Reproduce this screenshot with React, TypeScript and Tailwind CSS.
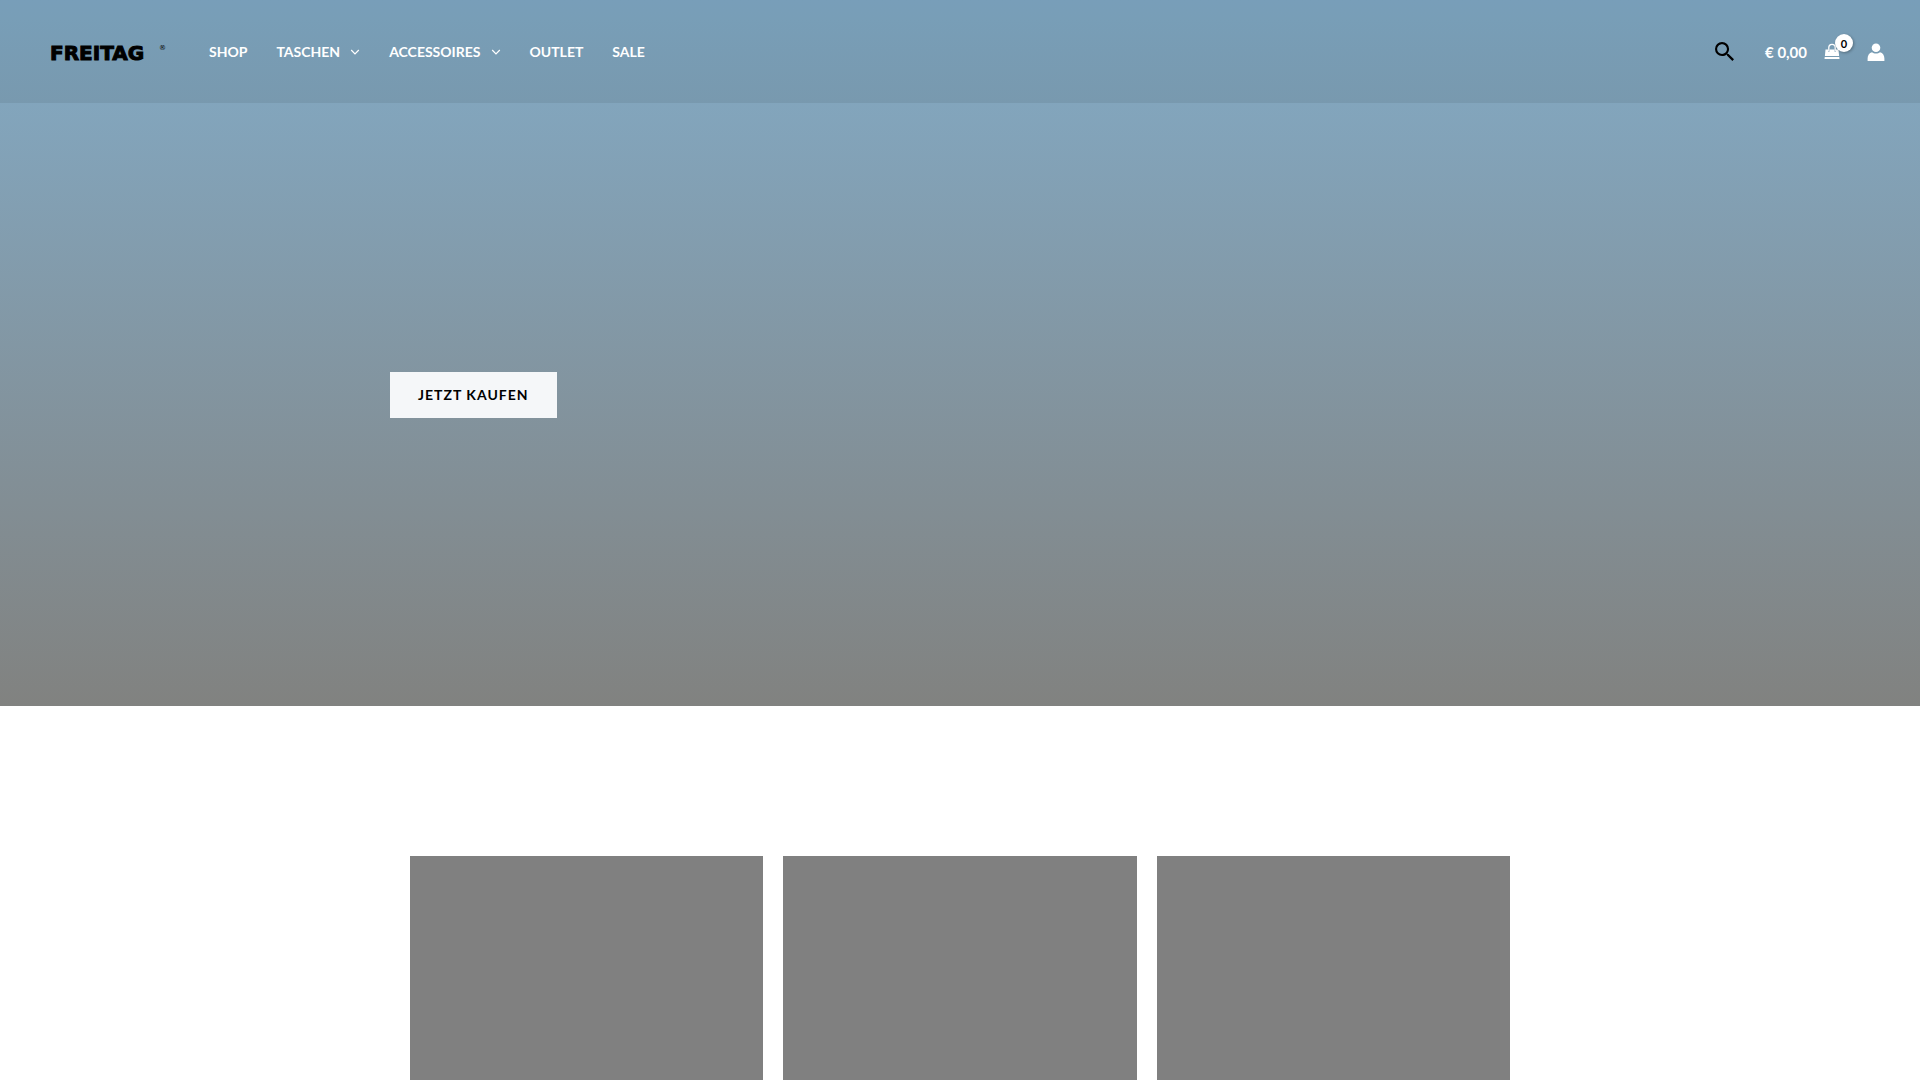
import React from "react";

type NavItem = { label: string; hasMenu?: boolean };

const navItems: NavItem[] = [
  { label: "SHOP" },
  { label: "TASCHEN", hasMenu: true },
  { label: "ACCESSOIRES", hasMenu: true },
  { label: "OUTLET" },
  { label: "SALE" },
];

const categories = ["Kategorie 1", "Kategorie 2", "Kategorie 3"];

function Chevron() {
  return (
    <svg viewBox="0 0 10 6" className="ml-2.5 h-1.5 w-2.5" fill="none" stroke="currentColor" strokeWidth="1.2" aria-hidden="true">
      <path d="M1.200 1l3.800 3.800L8.800 1" />
    </svg>
  );
}

function SearchIcon() {
  return (
    <svg viewBox="3 3 17.5 17.5" className="h-[19px] w-[19px]" fill="currentColor" aria-hidden="true">
      <path d="M15.5 14h-.79l-.28-.27A6.47 6.47 0 0 0 16 9.500 6.500 6.500 0 1 0 9.500 16c1.610 0 3.090-.59 4.230-1.570l.27.28v.79l5 4.990L20.490 19l-4.990-5zm-6 0C7.010 14 5 11.990 5 9.500S7.010 5 9.500 5 14 7.010 14 9.500 11.990 14 9.500 14z" />
    </svg>
  );
}

function BagIcon() {
  return (
    <svg viewBox="0 0 16 17" className="h-[17px] w-4" aria-hidden="true">
      <path d="M4.800 8V4.500a3.200 3.200 0 0 1 6.400 0V8" fill="none" stroke="currentColor" strokeWidth="1.300" />
      <path d="M1.500 6.500h2.500v2h1.600v-2h4.800v2H12v-2h2.500l.6 6.500H.9z" fill="currentColor" />
      <path d="M.7 13.900h14.600l.2 2.100H.5z" fill="currentColor" />
    </svg>
  );
}

function UserIcon() {
  return (
    <svg viewBox="0 0 18 18" className="h-[18px] w-[18px]" fill="currentColor" aria-hidden="true">
      <circle cx="9" cy="4.700" r="4.300" />
      <path d="M5 9.200c1 .9 2.400 1.400 4 1.400s3-.5 4-1.400c2.900.7 4.400 3.200 4.400 6.400V18H.6v-2.400c0-3.200 1.500-5.700 4.400-6.400z" />
    </svg>
  );
}

export default function App() {
  return (
    <div className="min-h-screen overflow-x-hidden bg-white font-['Lato',sans-serif]">
      <div className="bg-linear-to-b from-[#82abc7] to-[#818280]">
        <header className="flex items-center bg-black/7 py-8 pr-[35px] pl-[50px] text-white">
          <a href="#" aria-label="FREITAG" className="flex h-[39px] w-[116px] items-start justify-between font-['DejaVu_Sans',sans-serif] text-black">
            <span className="text-xl leading-[42px] font-bold [-webkit-text-stroke:1px_black]">FREITAG</span>
            <span className="mt-2.5 text-[7px] leading-3">®</span>
          </a>
          <nav className="ml-[43px] flex gap-[29px] text-sm leading-5 font-bold">
            {navItems.map((item) => (
              <a key={item.label} href="#" className="flex items-center">
                {item.label}
                {item.hasMenu && <Chevron />}
              </a>
            ))}
          </nav>
          <div className="ml-auto flex items-center">
            <button type="button" aria-label="Suche" className="text-black">
              <SearchIcon />
            </button>
            <a href="#" className="ml-[31px] flex items-center text-[15px] leading-6 font-bold">
              € 0,00
              <span className="relative ml-[17px]">
                <BagIcon />
                <span className="absolute -top-[9px] left-[11px] flex size-[18px] items-center justify-center rounded-full bg-white text-[11px] leading-none text-black shadow-[1px_1px_3px_rgba(0,0,0,0.3)]">
                  0
                </span>
              </span>
            </a>
            <a href="#" aria-label="Mein Konto" className="ml-[27px]">
              <UserIcon />
            </a>
          </div>
        </header>
        <section className="mx-auto max-w-[1140px] pt-[269px] pb-72">
          <a href="#" className="inline-block bg-[#f5f7f9] px-7 py-[13px] align-top text-sm leading-5 font-bold tracking-[1px] text-black">
            JETZT KAUFEN
          </a>
        </section>
      </div>
      <main className="mx-auto grid max-w-[1100px] grid-cols-3 gap-5 pt-[150px]">
        {categories.map((name) => (
          <a key={name} href="#" aria-label={name} className="h-56 bg-[#808080]" />
        ))}
      </main>
    </div>
  );
}
